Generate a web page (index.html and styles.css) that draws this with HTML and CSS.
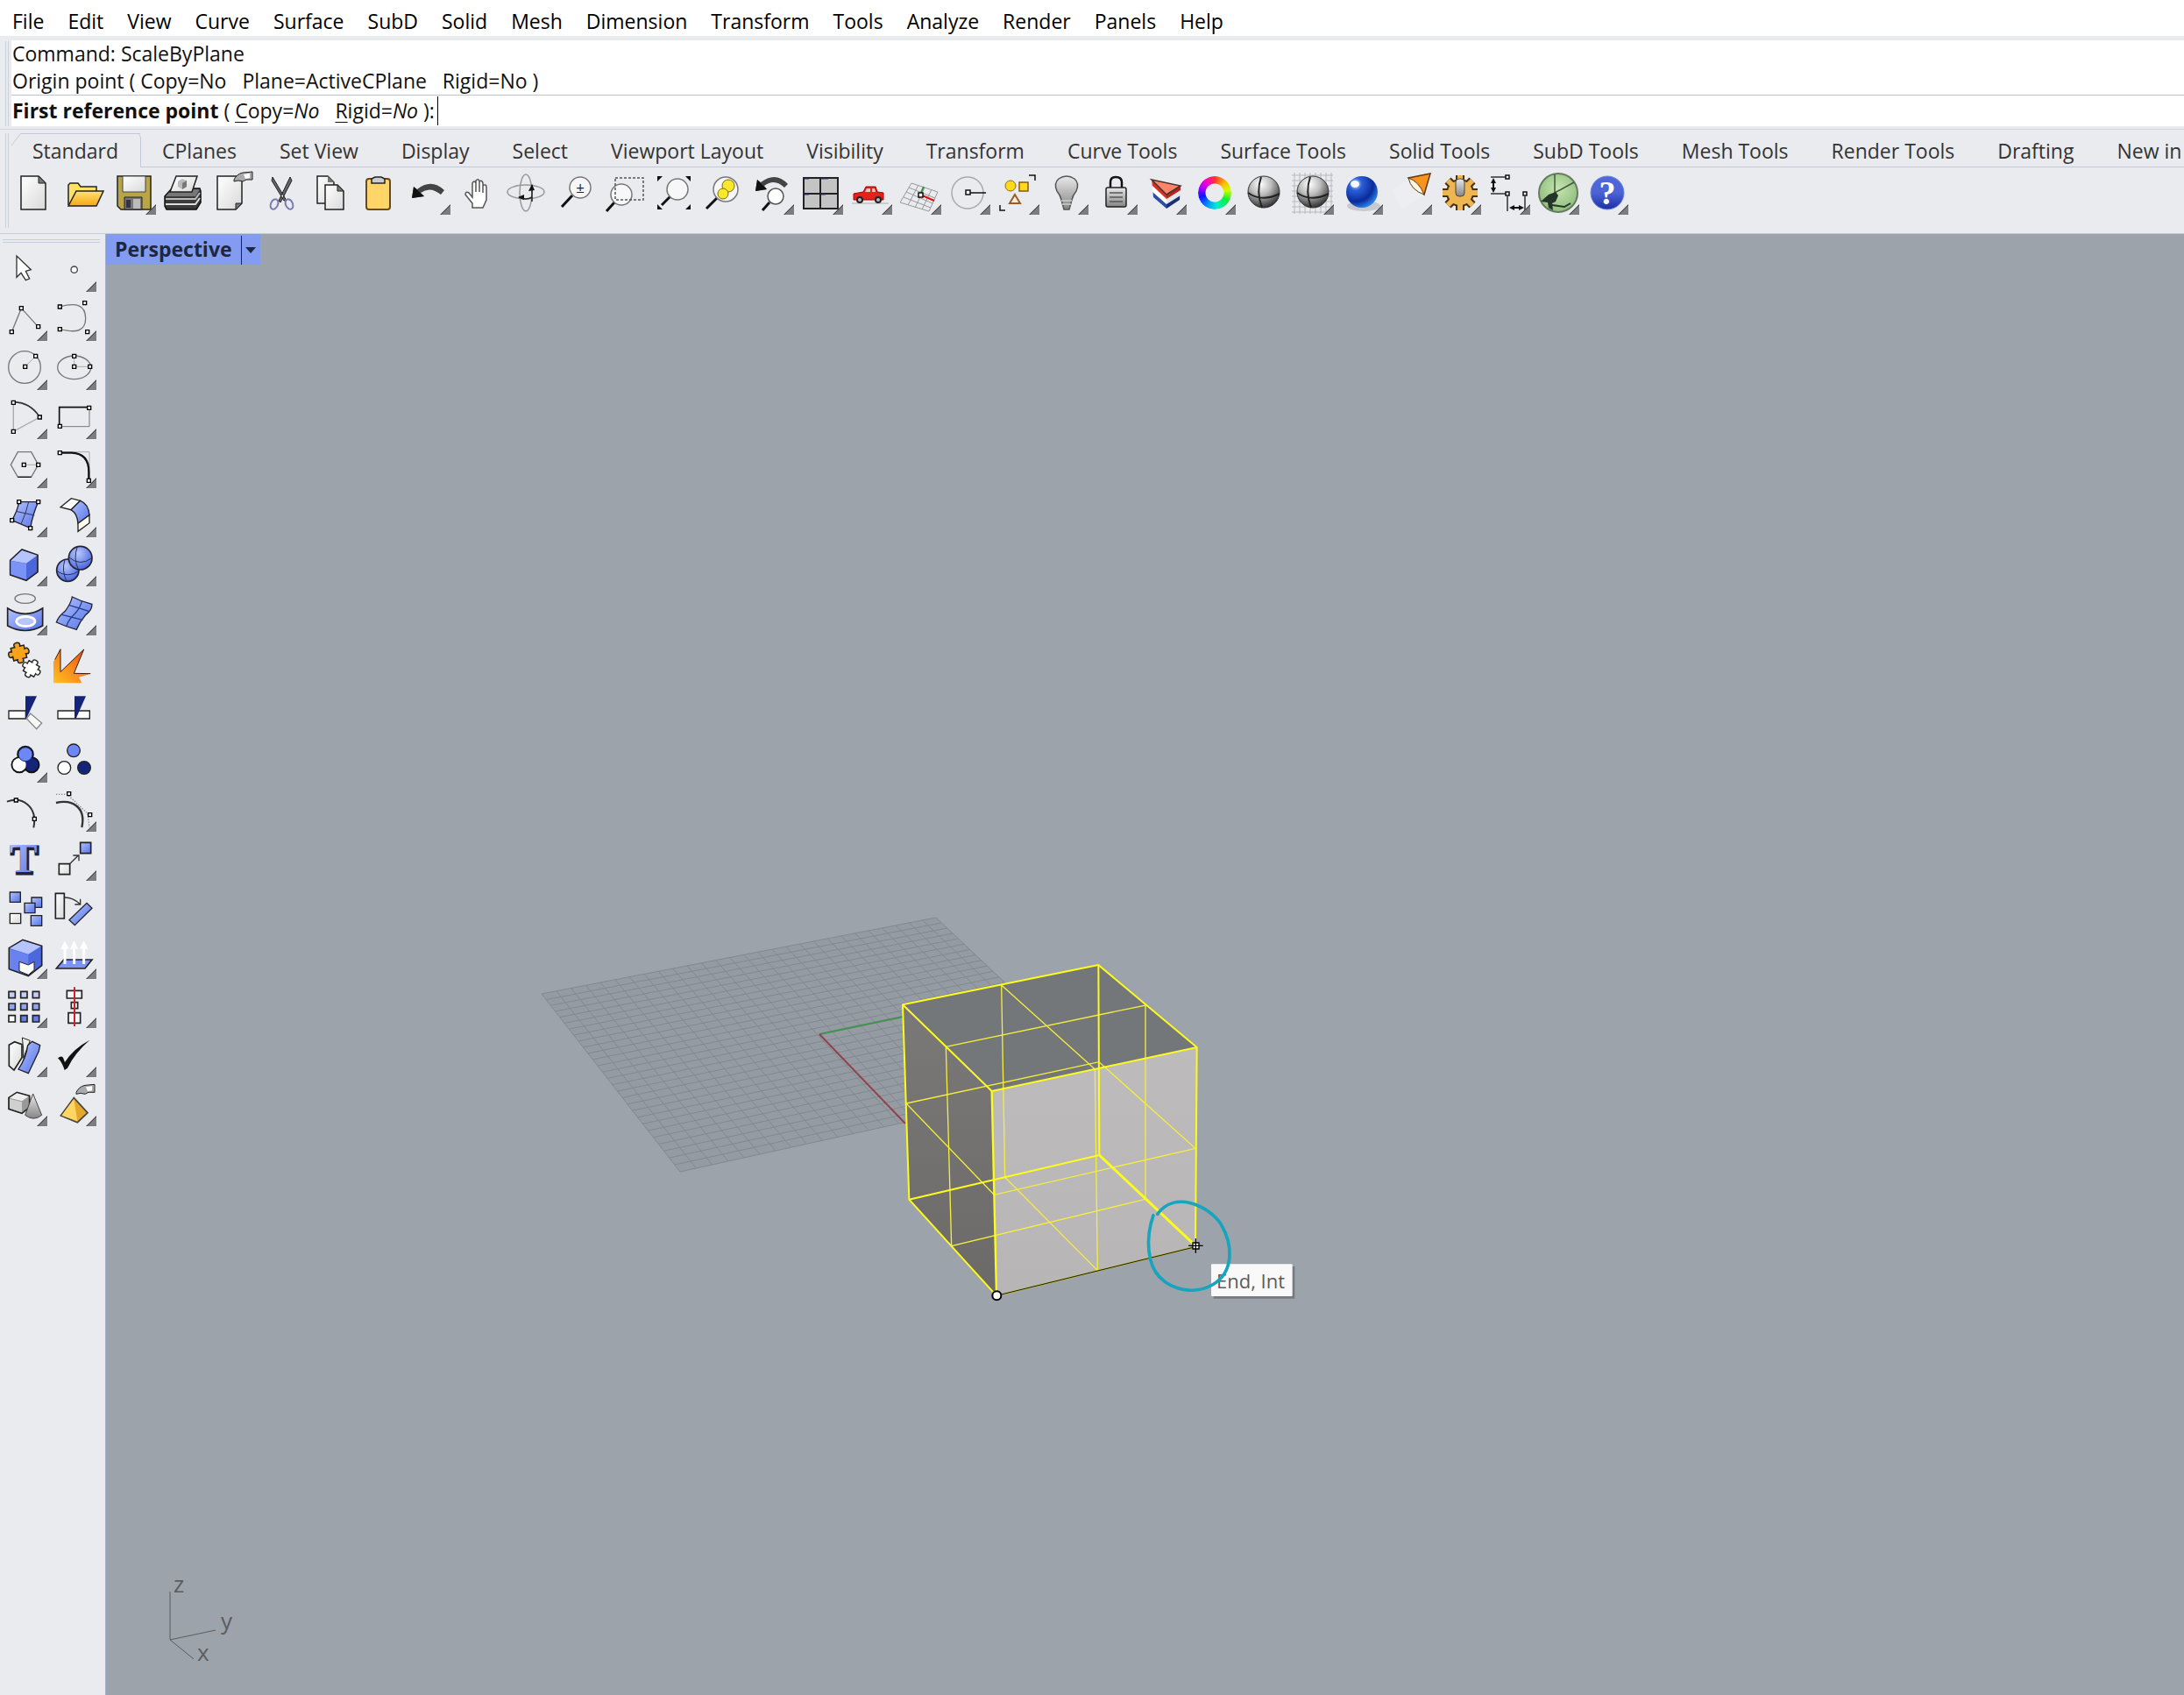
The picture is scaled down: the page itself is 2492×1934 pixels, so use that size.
FILE: index.html
```html
<!DOCTYPE html>
<html lang="en">
<head>
<meta charset="utf-8">
<title>Rhino</title>
<link rel="stylesheet" href="styles.css">
</head>
<body>
<svg class="defs" aria-hidden="true">
  <defs>
    <linearGradient id="paper" x1="0" y1="0" x2="1" y2="1"><stop offset="0" stop-color="#fff"/><stop offset="1" stop-color="#d9d9d9"/></linearGradient>
    <linearGradient id="blue" x1="0" y1="0" x2="1" y2="1"><stop offset="0" stop-color="#b3c3ff"/><stop offset="1" stop-color="#5573e8"/></linearGradient>
    <linearGradient id="gold" x1="0" y1="0" x2="0" y2="1"><stop offset="0" stop-color="#ffe27a"/><stop offset="1" stop-color="#f5a70f"/></linearGradient>
    <linearGradient id="steel" x1="0" y1="0" x2="0" y2="1"><stop offset="0" stop-color="#e8e8e8"/><stop offset="1" stop-color="#858585"/></linearGradient>
    <linearGradient id="fire" x1="1" y1="0" x2="0" y2="1"><stop offset="0" stop-color="#e8420b"/><stop offset=".5" stop-color="#f7861d"/><stop offset="1" stop-color="#ffc21f"/></linearGradient>
    <linearGradient id="quad" x1="0" y1="0" x2="0" y2="1"><stop offset="0" stop-color="#5068d8"/><stop offset=".5" stop-color="#4b63d6"/><stop offset="1" stop-color="#1d2fa5"/></linearGradient>
    <radialGradient id="ball" cx=".4" cy=".25" r=".75"><stop offset="0" stop-color="#fff"/><stop offset=".45" stop-color="#bdbdbd"/><stop offset="1" stop-color="#333"/></radialGradient>
    <radialGradient id="blueball" cx=".3" cy=".25" r=".8"><stop offset="0" stop-color="#e8f1ff"/><stop offset=".25" stop-color="#2b5fd8"/><stop offset=".7" stop-color="#0a2a9b"/><stop offset="1" stop-color="#2f86e8"/></radialGradient>
    <radialGradient id="softblue" cx=".4" cy=".3" r=".7"><stop offset="0" stop-color="#b9c8ff"/><stop offset="1" stop-color="#4a67dd"/></radialGradient>
    <radialGradient id="green" cx=".5" cy=".4" r=".6"><stop offset="0" stop-color="#c5e5ad"/><stop offset="1" stop-color="#8fbc7e"/></radialGradient>
    <linearGradient id="front" x1="0" y1="0" x2="0" y2="1"><stop offset="0" stop-color="#bdbbbc"/><stop offset="1" stop-color="#b7b5b6"/></linearGradient>
    <linearGradient id="side" x1="0" y1="0" x2="0" y2="1"><stop offset="0" stop-color="#7a7977"/><stop offset="1" stop-color="#6b6a69"/></linearGradient>
    <g id="sphere"><circle cx="24" cy="22" r="18" fill="url(#ball)" stroke="#333"/><path d="M21 5Q15 22 22 40M6 23Q22 34 42 24" fill="none" stroke="#222" stroke-width="2"/></g>
    <g id="pointer"><path d="M-1 9C1 5 4 2 9 1L20 0V9H13L9 11L4 10L-1 11Z" fill="#aaa" stroke="#222"/><path d="M10 3L17 2V7L12 8Z" fill="#fff"/></g>
    <path id="jigsaw" d="M-20-18H-8Q-12-30 0-30Q12-30 8-18H20V-7Q31-11 31 1Q31 12 20 8V20H8Q12 31 0 31Q-12 31-8 20H-20V8Q-31 12-31 1Q-31-11-20-7Z"/>
    <path id="teeth" d="M24 3V43M4 23H44M10 9L38 37M38 9L10 37"/>
  </defs>
</svg>

<nav class="menubar" aria-label="Main menu">
  <button>File</button><button>Edit</button><button>View</button><button>Curve</button><button>Surface</button><button>SubD</button><button>Solid</button><button>Mesh</button><button>Dimension</button><button>Transform</button><button>Tools</button><button>Analyze</button><button>Render</button><button>Panels</button><button>Help</button>
</nav>

<section class="command" aria-label="Command line">
  <div class="grip"></div>
  <div class="console">
    <p>Command: ScaleByPlane</p>
    <p>Origin point ( Copy=No&nbsp; <span class="opt">Plane=ActiveCPlane</span>&nbsp; <span class="opt">Rigid=No</span> )</p>
    <div class="prompt">
      <label for="cmd"><b>First reference point</b> ( <u>C</u>opy=<i>No</i>&nbsp; <span class="opt"><u>R</u>igid=<i>No</i></span> ):</label>
      <input id="cmd" type="text" autocomplete="off">
    </div>
  </div>
</section>

<section class="ribbon">
  <div class="grip"></div>
  <div class="ribbon-body">
    <div class="tabs" role="tablist">
      <button role="tab" class="active" aria-selected="true">Standard</button><button role="tab">CPlanes</button><button role="tab">Set View</button><button role="tab">Display</button><button role="tab">Select</button><button role="tab">Viewport Layout</button><button role="tab">Visibility</button><button role="tab">Transform</button><button role="tab">Curve Tools</button><button role="tab">Surface Tools</button><button role="tab">Solid Tools</button><button role="tab">SubD Tools</button><button role="tab">Mesh Tools</button><button role="tab">Render Tools</button><button role="tab">Drafting</button><button role="tab">New in</button>
    </div>
    <div class="tools">
      <button class="tool" aria-label="New"><svg viewBox="0 0 48 48"><path d="M6 4H26L34 12V42H6Z" fill="url(#paper)" stroke="#222" stroke-width="1.5"/><path d="M26 4V12H34Z" fill="#777" stroke="#222"/></svg></button>
      <button class="tool" aria-label="Open"><svg viewBox="0 0 48 48"><path d="M4 37V14L6 12H15L18 16H36V22" fill="#ffe06b" stroke="#222" stroke-width="1.5"/><path d="M4 38L13 21H44L36 38Z" fill="url(#gold)" stroke="#222" stroke-width="1.5"/></svg></button>
      <button class="tool fly" aria-label="Save"><svg viewBox="0 0 48 48"><path d="M4 4H42V42H8L4 38Z" fill="#b9a548" stroke="#222" stroke-width="1.5"/><path d="M10 4H36V22H10Z" fill="url(#paper)" stroke="#444"/><path d="M12 28H32V42H12Z" fill="#777" stroke="#222"/><path d="M14 31H19V40H14Z" fill="#334"/><path d="M22 30H30V41H22Z" fill="#bbb"/></svg></button>
      <button class="tool" aria-label="Print"><svg viewBox="0 0 48 48"><path d="M2 27L10 18H42L43 21V34L38 42H4L2 38Z" fill="#3a3a3a" stroke="#111" stroke-width="1.5"/><path d="M3 27L10 19H42L37 27Z" fill="#777"/><path d="M3 30H37L42 23" fill="none" stroke="#bbb" stroke-width="2"/><path d="M3 36H37L42 29" fill="none" stroke="#ddd" stroke-width="2"/><path d="M8 22L15 4H39L33 22Z" fill="url(#paper)" stroke="#222" stroke-width="1.5"/><path d="M17 10L22 7L27 9V16L22 19L17 16Z" fill="#bbb"/><path d="M22 12L27 9V16L22 19Z" fill="#777"/></svg></button>
      <button class="tool" aria-label="Document properties"><svg viewBox="0 0 48 48"><path d="M6 4H34V35L27 42H6Z" fill="url(#paper)" stroke="#222" stroke-width="1.5"/><path d="M27 42V35H34Z" fill="#777" stroke="#222"/><use href="#pointer" x="26" y="-1"/></svg></button>
      <button class="tool" aria-label="Cut"><svg viewBox="0 0 48 48"><path d="M13 5L29 32L26 32L12 9Z M33 5L20 32L22 34L35 9Z" fill="#666" stroke="#222"/><ellipse cx="15" cy="36" rx="4" ry="6" transform="rotate(25 15 36)" fill="none" stroke="#777bb0" stroke-width="2"/><ellipse cx="32" cy="36" rx="4" ry="6" transform="rotate(-25 32 36)" fill="none" stroke="#777bb0" stroke-width="2"/></svg></button>
      <button class="tool" aria-label="Copy"><svg viewBox="0 0 48 48"><path d="M8 4H20L27 11V35H8Z" fill="url(#paper)" stroke="#222" stroke-width="1.5"/><path d="M20 4V11H27Z" fill="#777"/><path d="M17 14H31L38 21V42H17Z" fill="url(#paper)" stroke="#222" stroke-width="1.5"/><path d="M31 14V21H38Z" fill="#777" stroke="#222"/></svg></button>
      <button class="tool" aria-label="Paste"><svg viewBox="0 0 48 48"><rect x="8" y="7" width="27" height="35" rx="3" fill="#ffd567" stroke="#6b4a10" stroke-width="2"/><path d="M14 12V7L18 5H25L29 7V12Z" fill="#ccc" stroke="#222" stroke-width="1.5"/></svg></button>
      <button class="tool fly" aria-label="Undo"><svg viewBox="0 0 48 48"><path d="M4 29L6 16L10 19Q26 6 41 20L37 25Q25 15 14 23L18 27Z" fill="#444"/><path d="M4 29L6 16L18 27Z" fill="#111"/></svg></button>
      <button class="tool" aria-label="Pan"><svg viewBox="0 0 48 48"><path d="M17 40V35L9 25Q9 21 13 23L17 28V12Q19 8 21 12V22V9Q24 6 25 10V22V10Q28 8 29 12V23V15Q33 12 33 17V31L29 40Z" fill="#fff" stroke="#555" stroke-width="1.5"/></svg></button>
      <button class="tool" aria-label="Rotate view"><svg viewBox="0 0 48 48" fill="none" stroke="#999" stroke-width="1.5"><ellipse cx="22" cy="22" rx="21" ry="8"/><ellipse cx="22" cy="23" rx="7" ry="21"/><path d="M29 14V33M29 28Q22 32 14 28" stroke="#222"/><path d="M25 21L29 13L32 20ZM20 25L13 28L20 31Z" fill="#111" stroke="none"/></svg></button>
      <button class="tool" aria-label="Zoom"><svg viewBox="0 0 48 48"><path d="M19 26L7 39" stroke="#111" stroke-width="3"/><circle cx="28" cy="17" r="12" fill="#f7f7f9" stroke="#777" stroke-width="1.5"/><text x="28" y="23" font-size="17" text-anchor="middle" font-family="Open Sans" fill="#222">±</text></svg></button>
      <button class="tool" aria-label="Zoom window"><svg viewBox="0 0 48 48"><path d="M11 34L2 44" stroke="#111" stroke-width="3"/><circle cx="19" cy="25" r="12" fill="#f7f7f9" stroke="#777" stroke-width="1.5"/><path d="M12 6H44V31H12Z" fill="none" stroke="#555" stroke-width="1.5" stroke-dasharray="3 2"/></svg></button>
      <button class="tool" aria-label="Zoom extents"><svg viewBox="0 0 48 48"><path d="M19 27L9 37" stroke="#111" stroke-width="3"/><circle cx="27" cy="19" r="12" fill="#f7f7f9" stroke="#777" stroke-width="1.5"/><path d="M4 4H10L4 10ZM42 4H36L42 10ZM4 42H10L4 36ZM42 42H36L42 36Z" fill="#111"/></svg></button>
      <button class="tool" aria-label="Zoom selected"><svg viewBox="0 0 48 48"><path d="M16 29L4 41" stroke="#111" stroke-width="3"/><circle cx="26" cy="19" r="14" fill="#f7f7f9" stroke="#777" stroke-width="1.5"/><circle cx="29" cy="15" r="7" fill="#fbe82a" stroke="#776a10"/><circle cx="23" cy="24" r="6" fill="#fbe82a" stroke="#776a10"/></svg></button>
      <button class="tool fly" aria-label="Undo view"><svg viewBox="0 0 48 48"><path d="M4 21L6 8L10 11Q27-2 41 13L37 17Q26 6 14 15L17 19Z" fill="#444"/><path d="M4 21L6 8L17 19Z" fill="#111"/><path d="M20 34L12 43" stroke="#111" stroke-width="3"/><circle cx="27" cy="27" r="9" fill="#fff" stroke="#555" stroke-width="1.5"/></svg></button>
      <button class="tool fly" aria-label="Four viewports"><svg viewBox="0 0 48 48"><path d="M3 6H42V41H3ZM22 6V41M3 24H42" fill="#c4c4c4" stroke="#222" stroke-width="2"/><path d="M4 7H9M23 7H31M4 25H9M23 25H28" stroke="#238" stroke-width="1"/></svg></button>
      <button class="tool fly" aria-label="Set view"><svg viewBox="0 0 48 48"><path d="M2 35H44" stroke="#ccc" stroke-width="2"/><path d="M4 31V24L15 22L18 16H29L31 22L38 23V31Z" fill="#e2231a" stroke="#a00"/><path d="M19 18H23V22H17ZM25 18H28L29 22H25Z" fill="#f6c5c5"/><circle cx="11" cy="31" r="4" fill="#222"/><circle cx="32" cy="31" r="4" fill="#222"/><circle cx="11" cy="31" r="2" fill="#bbb"/><circle cx="32" cy="31" r="2" fill="#bbb"/></svg></button>
      <button class="tool fly" aria-label="Construction plane"><svg viewBox="0 0 48 48"><path d="M14 12L44 22L34 44L1 34ZM22 14L10 37M29 17L18 40M37 19L26 42M11 17L41 29M8 22L38 35M5 28L36 40" fill="none" stroke="#999"/><path d="M24 25L28 16" stroke="#2a9a3a" stroke-width="2"/><path d="M24 25L40 32" stroke="#d11" stroke-width="2"/><rect x="22" y="23" width="5" height="5" fill="#fff" stroke="#111" stroke-width="1.5"/></svg></button>
      <button class="tool fly" aria-label="Object snap"><svg viewBox="0 0 48 48"><circle cx="22" cy="23" r="18" fill="none" stroke="#aaa" stroke-width="1.5"/><path d="M25 23H43" stroke="#111" stroke-width="1.5"/><rect x="20" y="20" width="5" height="5" fill="#fff" stroke="#111" stroke-width="1.5"/></svg></button>
      <button class="tool fly" aria-label="Select"><svg viewBox="0 0 48 48"><circle cx="15" cy="15" r="6" fill="#ffd91c" stroke="#8a6a10"/><path d="M25 11H35V21H25Z" fill="#ffd91c" stroke="#8a5a10" stroke-width="1.5"/><path d="M20 25L26 35H14Z" fill="#f8eee2" stroke="#a05a20" stroke-width="2"/><path d="M36 3H43V9M3 37V43H9" fill="none" stroke="#111" stroke-width="1.5"/></svg></button>
      <button class="tool fly" aria-label="Hide"><svg viewBox="0 0 48 48"><path d="M17 31Q16 26 12 21Q8 12 14 7Q23 1 32 7Q38 12 34 21Q30 26 29 31L26 42H20Z" fill="url(#steel)" stroke="#555" stroke-width="1.5"/><path d="M17 32H29M18 36H28" stroke="#ccc" stroke-width="1.5"/></svg></button>
      <button class="tool fly" aria-label="Lock"><svg viewBox="0 0 48 48"><path d="M17 19V11Q17 5 23 5Q30 5 30 11V19" fill="none" stroke="#111" stroke-width="2.5"/><rect x="12" y="17" width="23" height="22" rx="2" fill="url(#steel)" stroke="#222" stroke-width="1.5"/><path d="M16 23H31M16 28H31M16 33H31" stroke="#555" stroke-width="1.5"/></svg></button>
      <button class="tool fly" aria-label="Layers"><svg viewBox="0 0 48 48"><path d="M8 8L25 24V41L10 28Z" fill="#2c4ea8"/><path d="M25 24L41 15L40 31L25 41Z" fill="#1a2f78"/><path d="M8 8L25 24V36L9 22Z" fill="#fff"/><path d="M25 24L41 15V26L25 36Z" fill="#e6e6ea"/><path d="M8 8L25 24V30L9 15Z" fill="#d8321f"/><path d="M25 24L41 15V20L25 30Z" fill="#b5241a"/><path d="M8 8L41 15L25 25Z" fill="#ff8568" stroke="#433" stroke-width="1.5"/></svg></button>
      <button class="tool fly" aria-label="Object properties"><span class="wheel"></span></button>
      <button class="tool" aria-label="Shade"><svg viewBox="0 0 48 48"><use href="#sphere"/></svg></button>
      <button class="tool fly" aria-label="Render preview"><svg viewBox="0 0 48 48"><path d="M3 0V47M9 0V47M15 0V47M21 0V47M27 0V47M33 0V47M39 0V47M45 0V47M0 3H47M0 9H47M0 15H47M0 21H47M0 27H47M0 33H47M0 39H47M0 45H47" stroke="#b7b8bd"/><use href="#sphere"/></svg></button>
      <button class="tool fly" aria-label="Render"><svg viewBox="0 0 48 48"><ellipse cx="26" cy="38" rx="19" ry="6" fill="#c9cad0"/><circle cx="24" cy="22" r="18" fill="url(#blueball)"/><ellipse cx="16" cy="13" rx="5" ry="4" fill="#fff" opacity=".9"/></svg></button>
      <button class="tool fly" aria-label="Lights"><svg viewBox="0 0 48 48"><path d="M20 8L38 26L14 42L2 20Z" fill="#f3f3f5" opacity=".4"/><path d="M21 6L46 1L39 25Z" fill="#f9931f" stroke="#5b3a12" stroke-width="1.5"/><path d="M21 6Q33 10 39 25Q24 20 21 6Z" fill="#fff4dd" stroke="#5b3a12"/></svg></button>
      <button class="tool fly" aria-label="Options"><svg viewBox="0 0 48 48"><use href="#teeth" stroke="#4a300a" stroke-width="10"/><circle cx="24" cy="23" r="16" fill="#4a300a"/><use href="#teeth" stroke="#eeb651" stroke-width="6"/><circle cx="24" cy="23" r="14" fill="#eeb651"/><rect x="19" y="7" width="10" height="20" rx="4" fill="url(#steel)" stroke="#444"/></svg></button>
      <button class="tool fly" aria-label="Dimensions"><svg viewBox="0 0 48 48"><path d="M3 5H20M3 24H20M22 27V44M42 27V44" stroke="#333" stroke-width="1.5"/><path d="M6 10V19M28 40H36" stroke="#111" stroke-width="2"/><path d="M3 12L6 6L9 12ZM3 17L6 23L9 17ZM30 37L24 40L30 43ZM35 37L41 40L35 43Z" fill="#111"/><path d="M20 3H24V7H20ZM20 22H24V26H20ZM40 22H44V26H40Z" fill="#fff" stroke="#111" stroke-width="1.5"/></svg></button>
      <button class="tool fly" aria-label="Grasshopper"><svg viewBox="0 0 48 48"><circle cx="24" cy="23" r="22" fill="url(#green)" stroke="#667c60" stroke-width="2"/><path d="M20 2V23L42 11" fill="none" stroke="#415540" stroke-width="1.5"/><path d="M4 33L13 25L21 22L24 26L21 33L17 35L18 43L13 40L12 34Z" fill="#263328"/><path d="M17 37L31 39L38 35" fill="none" stroke="#263328" stroke-width="2"/></svg></button>
      <button class="tool fly" aria-label="Help"><svg viewBox="0 0 48 48"><circle cx="24" cy="23" r="19" fill="url(#quad)" stroke="#7086d8"/><text x="24" y="36" font-size="38" font-weight="bold" text-anchor="middle" font-family="Liberation Serif" fill="#fff">?</text></svg></button>
    </div>
  </div>
</section>

<main class="workspace">
  <aside class="sidebar" aria-label="Main tools">
    <div class="grip-h"></div>
    <div class="palette">
      <button class="tool" aria-label="Select"><svg viewBox="18 45 144 144"><path d="M57 66V139L72 124L88 149L101 144L88 118L106 113Z" fill="#fff" stroke="#333" stroke-width="4"/></svg></button>
      <button class="tool fly" aria-label="Point"><svg viewBox="186 45 144 144"><circle cx="254" cy="113" r="11" fill="#fff" stroke="#444" stroke-width="4"/></svg></button>

      <button class="tool fly" aria-label="Polyline"><svg viewBox="18 213 144 144"><path d="M40 326L73 245L130 308" class="ln"/><path d="M34 320h12v12h-12zM67 239h12v12h-12zM125 302h12v12h-12z" class="pt"/></svg></button>
      <button class="tool fly" aria-label="Curve"><svg viewBox="186 213 144 144"><path d="M205 240C260 225 293 232 293 280C293 325 260 330 205 317" class="ln"/><path d="M199 234h12v12h-12zM284 221h12v12h-12zM199 311h12v12h-12zM293 320h12v12h-12z" class="pt"/></svg></button>

      <button class="tool fly" aria-label="Circle"><svg viewBox="18 381 144 144"><circle cx="84" cy="447" r="55" class="ln"/><path d="M86 445L122 409" stroke="#aaa" stroke-width="3"/><path d="M80 439h12v12h-12zM116 403h12v12h-12z" class="pt"/></svg></button>
      <button class="tool fly" aria-label="Ellipse"><svg viewBox="186 381 144 144"><ellipse cx="254" cy="448" rx="57" ry="40" class="ln"/><path d="M254 409V445H308" fill="none" stroke="#aaa" stroke-width="3"/><path d="M248 403h12v12h-12zM248 439h12v12h-12zM302 439h12v12h-12z" class="pt"/></svg></button>

      <button class="tool fly" aria-label="Arc"><svg viewBox="18 549 144 144"><path d="M46 568V667L136 618" fill="none" stroke="#aaa" stroke-width="4"/><path d="M46 566Q105 568 136 618" fill="none" stroke="#333" stroke-width="5"/><path d="M40 562h12v12h-12zM40 661h12v12h-12zM130 612h12v12h-12z" class="pt"/></svg></button>
      <button class="tool fly" aria-label="Rectangle"><svg viewBox="186 549 144 144"><path d="M204 650H306V584" fill="none" stroke="#777" stroke-width="3"/><path d="M203 650V584H306" fill="none" stroke="#111" stroke-width="5"/><path d="M199 643h12v12h-12zM299 580h12v12h-12z" class="pt"/></svg></button>

      <button class="tool fly" aria-label="Polygon"><svg viewBox="18 -3 144 144"><path d="M37 61L61 17H107L131 61L107 103H61Z" class="ln"/><path d="M61 103H107" stroke="#111" stroke-width="4"/><path d="M82 61H130" stroke="#aaa" stroke-width="3"/><path d="M76 55h12v12h-12zM125 55h12v12h-12z" class="pt"/></svg></button>
      <button class="tool fly" aria-label="Fillet"><svg viewBox="186 -3 144 144"><path d="M205 17H306V115" fill="none" stroke="#aaa" stroke-width="3"/><path d="M205 20H245Q304 22 304 85V115" fill="none" stroke="#111" stroke-width="7"/><path d="M199 14h12v12h-12zM298 109h12v12h-12z" class="pt"/></svg></button>

      <button class="tool fly" aria-label="Surface"><svg viewBox="18 165 144 144"><path d="M65 188H131Q112 230 104 278L41 251Q60 218 65 188Z" fill="url(#blue)" stroke="#223" stroke-width="4"/><path d="M98 188Q90 225 72 264M54 220L118 234" fill="none" stroke="#335" stroke-width="3"/><path d="M59 182h12v12h-12zM125 182h12v12h-12zM35 245h12v12h-12zM98 272h12v12h-12z" class="pt"/></svg></button>
      <button class="tool fly" aria-label="Fillet surface"><svg viewBox="186 165 144 144"><path d="M207 206L244 176L275 184L243 215Z" fill="#fff" stroke="#222" stroke-width="4"/><path d="M243 215L275 184Q303 195 306 233L267 262Q265 228 243 215Z" fill="url(#blue)" stroke="#222" stroke-width="4"/><path d="M267 262L306 233V260L267 289Z" fill="#fffdf2" stroke="#222" stroke-width="4"/></svg></button>

      <button class="tool fly" aria-label="Box"><svg viewBox="18 333 144 144"><path d="M35 388L75 351L129 370V428L90 457L35 438Z" fill="#4c67dc" stroke="#222" stroke-width="5"/><path d="M37 389L75 354L127 371L90 398Z" fill="#b5c4ff"/><path d="M37 390L90 399V454L37 436Z" fill="#7a93f5"/></svg></button>
      <button class="tool fly" aria-label="Sphere"><svg viewBox="186 333 144 144"><circle cx="232" cy="422" r="38" fill="url(#softblue)" stroke="#223" stroke-width="5"/><path d="M222 385Q210 425 228 459M195 425Q232 450 269 425" fill="none" stroke="#235" stroke-width="3"/><circle cx="275" cy="380" r="40" fill="url(#softblue)" stroke="#223" stroke-width="5"/><path d="M265 341Q250 380 268 419M236 378Q275 410 314 380" fill="none" stroke="#235" stroke-width="3"/></svg></button>

      <button class="tool fly" aria-label="Project"><svg viewBox="18 501 144 144"><ellipse cx="86" cy="519" rx="35" ry="16" class="ln"/><path d="M26 552Q86 590 146 552V612Q86 645 26 612Z" fill="url(#blue)" stroke="#222" stroke-width="5"/><ellipse cx="88" cy="597" rx="32" ry="17" fill="#b8c5f8" stroke="#fff" stroke-width="8"/></svg></button>
      <button class="tool fly" aria-label="Extract surface"><svg viewBox="186 501 144 144"><path d="M247 513Q280 530 315 538Q315 560 293 575Q272 600 262 625Q225 615 193 600Q200 580 223 562Q243 535 247 513Z" fill="url(#blue)" stroke="#223" stroke-width="4"/><path d="M281 526Q275 550 257 570Q235 590 228 612M238 542L304 562M212 574L283 592" fill="none" stroke="#223c88" stroke-width="4"/></svg></button>

      <button class="tool" aria-label="Join"><svg viewBox="18 -21 144 144"><g stroke="#222" stroke-width="4"><use href="#jigsaw" transform="translate(64 14) rotate(-14) scale(1.15)" fill="#f9a21b"/><use href="#jigsaw" transform="translate(108 68) rotate(30) scale(1.05)" fill="#fff"/></g></svg></button>
      <button class="tool" aria-label="Explode"><svg viewBox="186 -21 144 144"><path d="M183 118V45L188 38L207 2V80L287 3L253 85L310 86L270 98L280 118Z" fill="url(#fire)"/><path d="M188 38L207 2V80L287 3L253 85L310 86" fill="none" stroke="#3a1a0a" stroke-width="3"/></svg></button>

      <button class="tool" aria-label="Trim"><svg viewBox="18 147 144 144"><path d="M30 213H88V240H30Z" fill="#fff" stroke="#222" stroke-width="4"/><path d="M87 163H126L90 240H87Z" fill="#13247a"/><path d="M104 222L143 255L125 275L91 240Z" fill="#f7f7f7" stroke="#888" stroke-width="4"/></svg></button>
      <button class="tool" aria-label="Split"><svg viewBox="186 147 144 144"><path d="M198 213H307V240H198Z" fill="#fff" stroke="#222" stroke-width="4"/><path d="M255 163H294L260 240H255Z" fill="#13247a"/></svg></button>

      <button class="tool fly" aria-label="Boolean union"><svg viewBox="18 315 144 144"><g fill="none" stroke="#111" stroke-width="11"><circle cx="66" cy="398" r="23"/><circle cx="108" cy="398" r="23"/><circle cx="87" cy="362" r="24"/></g><circle cx="108" cy="398" r="23" fill="#13247a"/><circle cx="66" cy="398" r="23" fill="#fff"/><circle cx="87" cy="362" r="24" fill="#6f86f5" stroke="#13247a" stroke-width="3"/></svg></button>
      <button class="tool" aria-label="Group"><svg viewBox="186 315 144 144"><g stroke="#222" stroke-width="4"><circle cx="252" cy="349" r="22" fill="#6f86f5"/><circle cx="220" cy="408" r="22" fill="#fff"/><circle cx="288" cy="408" r="22" fill="#13247a"/></g></svg></button>

      <button class="tool" aria-label="Edit points"><svg viewBox="18 483 144 144"><path d="M24 524C75 505 130 540 115 613" fill="none" stroke="#333" stroke-width="6"/><path d="M49 513h12v12h-12zM112 577h12v12h-12z" class="pt"/></svg></button>
      <button class="tool fly" aria-label="Control points"><svg viewBox="186 483 144 144"><path d="M192 528C250 515 295 545 280 612" fill="none" stroke="#333" stroke-width="7"/><path d="M192 499H230L300 565L306 612" fill="none" stroke="#888" stroke-width="4" stroke-dasharray="4 5"/><path d="M230 491h12v12h-12zM302 563h12v12h-12z" class="pt"/></svg></button>

      <button class="tool" aria-label="Text"><svg viewBox="18 651 144 144"><g font-family="Liberation Serif" font-weight="bold" font-size="142" text-anchor="middle"><text x="84" y="770" fill="#233" stroke="#223" stroke-width="9">T</text><text x="80" y="766" fill="url(#blue)">T</text></g></svg></button>
      <button class="tool fly" aria-label="Move"><svg viewBox="186 651 144 144"><path d="M202 737H239V773H202Z" fill="url(#paper)" stroke="#222" stroke-width="5"/><path d="M275 664H311V701H275Z" fill="url(#blue)" stroke="#222" stroke-width="5"/><path d="M240 736L269 707M250 708H270V727" fill="none" stroke="#333" stroke-width="4"/></svg></button>

      <button class="tool" aria-label="Copy"><svg viewBox="18 9 144 144"><g stroke="#222" stroke-width="4"><path d="M34 24H70V58H34Z" fill="url(#blue)"/><path d="M108 42H143V76H108Z" fill="url(#blue)"/><path d="M84 61H120V95H84Z" fill="url(#blue)"/><path d="M106 104H143V139H106Z" fill="url(#blue)"/><path d="M34 97H71V131H34Z" fill="url(#paper)"/></g></svg></button>
      <button class="tool" aria-label="Rotate"><svg viewBox="186 9 144 144"><path d="M190 28H220V114H190Z" fill="url(#paper)" stroke="#222" stroke-width="5"/><path d="M237 119L297 61L315 79L256 137Z" fill="url(#blue)" stroke="#222" stroke-width="4"/><path d="M222 42Q250 42 273 64M275 47V66H256" fill="none" stroke="#333" stroke-width="4"/></svg></button>

      <button class="tool fly" aria-label="Solid editing"><svg viewBox="18 177 144 144"><path d="M31 215L78 187L143 208V275L97 311L31 287Z" fill="#4d68de" stroke="#222" stroke-width="5"/><path d="M33 216L78 190L140 209L97 236Z" fill="#b5c4ff"/><path d="M33 218L97 238V307L33 285Z" fill="#6982f0"/><path d="M66 262L97 273L117 262V290L97 307L66 294Z" fill="#fff" stroke="#222" stroke-width="3"/></svg></button>
      <button class="tool fly" aria-label="Analyze direction"><svg viewBox="186 177 144 144"><path d="M193 285L218 255H315L291 285Z" fill="#7c94f5" stroke="#222" stroke-width="5"/><path d="M222 270V215M254 270V215M287 270V215" stroke="#fff" stroke-width="9"/><path d="M208 218L222 190L236 218ZM240 218L254 190L268 218ZM273 218L287 190L301 218Z" fill="#fff"/></svg></button>

      <button class="tool fly" aria-label="Array"><svg viewBox="18 345 144 144"><g stroke="#222" stroke-width="5"><path d="M30 364h22v22h-22zM71 364h22v22h-22zM112 364h22v22h-22z" fill="#c4cff8"/><path d="M30 405h22v22h-22zM71 405h22v22h-22zM112 405h22v22h-22z" fill="#92a5f2"/><path d="M71 446h22v22h-22zM112 446h22v22h-22z" fill="#6780ea"/><path d="M30 446h22v22h-22z" fill="#fff"/></g></svg></button>
      <button class="tool fly" aria-label="Align"><svg viewBox="186 345 144 144"><path d="M229 361H280V387H229ZM244 401H266V422H244ZM234 437H275V472H234Z" fill="#f7f7f7" stroke="#222" stroke-width="5"/><path d="M255 349V483" stroke="#d3202a" stroke-width="6"/></svg></button>

      <button class="tool fly" aria-label="Flow"><svg viewBox="18 513 144 144"><path d="M76 522L103 532L80 592V560Z" fill="#eee" stroke="#222" stroke-width="3"/><path d="M31 547L50 536L75 545V590L48 633L31 618Z" fill="url(#paper)" stroke="#222" stroke-width="5"/><path d="M95 548L110 535L137 548L133 568L97 644L63 630Q90 590 95 548Z" fill="url(#blue)" stroke="#222" stroke-width="4"/></svg></button>
      <button class="tool fly" aria-label="Check"><svg viewBox="186 513 144 144"><path d="M198 592Q210 582 216 590L222 606Q250 560 307 530Q255 575 231 626L221 633Q212 605 198 592Z" fill="#111"/></svg></button>

      <button class="tool fly" aria-label="Mesh"><svg viewBox="18 681 144 144"><path d="M30 727L58 709L101 721V760L75 781L30 766Z" fill="#999" stroke="#222" stroke-width="5"/><path d="M33 728L58 712L98 723L75 739Z" fill="#eee"/><path d="M33 731L75 742V778L33 764Z" fill="#cfcfcf"/><path d="M113 714L143 787Q115 810 86 787Z" fill="url(#steel)" stroke="#444" stroke-width="3"/></svg></button>
      <button class="tool fly" aria-label="Edit mesh"><svg viewBox="186 681 144 144"><path d="M253 728L300 779L265 812L208 789Z" fill="#e2a82c" stroke="#444" stroke-width="5"/><path d="M253 731L265 808L211 788Z" fill="#ffd564"/><use href="#pointer" transform="translate(264 682) scale(3)"/></svg></button>
    </div>
  </aside>

  <section class="viewport" aria-label="Perspective viewport">
    <svg class="scene" viewBox="121 267 2371 1667">
      <g id="cplane"></g>
      <path class="axis-y" d="M935 1180L1030 1160"/>
      <path class="axis-x" d="M935 1180L1033 1282"/>
      <svg x="1000" y="1080" width="500" height="420" viewBox="0 0 1500 1260">
        <path d="M90 199L760 63L1097 345L395 495Z" fill="#74777a"/>
        <path d="M90 199L395 495L411 1195L112 866Z" fill="url(#side)"/>
        <path d="M395 495L1097 345L1092 1024L411 1195Z" fill="url(#front)"/>
        <g fill="none" stroke="#f4ee3c" stroke-width="4">
          <path d="M428 132L748 420L757 1109L440 790ZM238 343L921 201V865L257 1025Z"/>
          <path d="M102 537L762 395L1092 691L403 850Z"/>
        </g>
        <g fill="none" stroke="#fdfb1e" stroke-width="6" stroke-linejoin="round">
          <path d="M90 199L760 63L1097 345L395 495ZM90 199L112 866L411 1195M112 866L763 714M760 63L763 714M1097 345L1092 1024"/>
          <path d="M395 495L411 1195" stroke-width="7"/>
          <path d="M763 714L1092 1024" stroke-width="9"/>
        </g>
        <path d="M411 1195L1092 1028" stroke="#c9c320" stroke-width="5"/>
        <path d="M411 1195L1092 1028" stroke="#1c1c08" stroke-width="3"/>
        <circle cx="412" cy="1195" r="15" fill="#fff" stroke="#000" stroke-width="6"/>
        <path d="M1083 1014h21v21h-21z" fill="#fff" stroke="#000" stroke-width="4"/>
        <path d="M1068 1024H1118M1093 999V1049" stroke="#000" stroke-width="4"/>
        <path d="M1154 1095H1432V1205H1154Z" fill="#6d7177" opacity=".8"/>
        <rect x="1146" y="1087" width="278" height="110" rx="3" fill="#f9f9fa"/>
        <text x="1164" y="1169" font-size="66" fill="#5c5c5c">End, Int</text>
        <path d="M948 920C920 1000 928 1090 970 1132C1015 1180 1095 1190 1150 1158C1225 1115 1222 1020 1178 948C1135 885 1020 835 962 916" fill="none" stroke="#16a5bf" stroke-width="11" stroke-linecap="round"/>
      </svg>
      <g class="axes">
        <path d="M194 1816V1871L246 1860M194 1871L221 1893" fill="none" stroke="#5a5d61" stroke-width="1"/>
        <text x="198" y="1817">z</text><text x="252" y="1859">y</text><text x="225" y="1895">x</text>
      </g>
    </svg>
    <div class="title"><button class="name">Perspective</button><button class="drop" aria-label="Viewport menu"></button></div>
  </section>
</main>
<script src="grid.js"></script>
</body>
</html>
```

FILE: grid.js
```js
// Draws the construction plane grid by projecting a unit square onto its four screen corners.
(function () {
  var corners = [[618, 1134], [1068, 1047], [1262, 1230], [776, 1337]];
  var cells = 28;
  var p = corners;
  var dx1 = p[1][0] - p[2][0], dx2 = p[3][0] - p[2][0], sx = p[0][0] - p[1][0] + p[2][0] - p[3][0];
  var dy1 = p[1][1] - p[2][1], dy2 = p[3][1] - p[2][1], sy = p[0][1] - p[1][1] + p[2][1] - p[3][1];
  var det = dx1 * dy2 - dx2 * dy1;
  var g = (sx * dy2 - dx2 * sy) / det, h = (dx1 * sy - sx * dy1) / det;
  var a = p[1][0] - p[0][0] + g * p[1][0], b = p[3][0] - p[0][0] + h * p[3][0];
  var d = p[1][1] - p[0][1] + g * p[1][1], e = p[3][1] - p[0][1] + h * p[3][1];

  function at(u, v) {
    var w = g * u + h * v + 1;
    return ((a * u + b * v + p[0][0]) / w).toFixed(1) + ' ' + ((d * u + e * v + p[0][1]) / w).toFixed(1);
  }
  function add(path, cls) {
    var el = document.createElementNS('http://www.w3.org/2000/svg', 'path');
    el.setAttribute('d', path);
    el.setAttribute('class', cls);
    document.getElementById('cplane').appendChild(el);
  }

  var lines = '';
  for (var i = 0; i <= cells; i++) {
    var t = i / cells;
    lines += 'M' + at(t, 0) + 'L' + at(t, 1) + 'M' + at(0, t) + 'L' + at(1, t);
  }
  add('M' + at(0, 0) + 'L' + at(1, 0) + 'L' + at(1, 1) + 'L' + at(0, 1) + 'Z', 'plane');
  add(lines, 'grid-lines');
})();
```

FILE: styles.css
```css
* { box-sizing: border-box; }

body {
  margin: 0;
  min-height: 100vh;
  display: flex;
  flex-direction: column;
  background: #eaebef;
  color: #111;
  font: 23px/31px "Open Sans", "Noto Sans", sans-serif;
  overflow-x: hidden;
}

button {
  margin: 0;
  padding: 0;
  border: 0;
  background: none;
  color: inherit;
  font: inherit;
  white-space: nowrap;
}

.defs { position: absolute; width: 0; height: 0; }

.menubar {
  display: flex;
  gap: 27px;
  height: 41px;
  padding: 7px 14px 0;
  background: #fff;
  color: #000;
}

.command {
  display: flex;
  margin: 5px 0 3px;
}

.grip {
  flex: none;
  width: 4px;
  margin: 1px 3px 0 6px;
  border: solid #c9d0de;
  border-width: 0 1px;
}

.console {
  flex: 1;
  background: #fff;
  white-space: nowrap;
}
.console p { margin: 0; padding-left: 1px; }
.opt { margin-left: 6px; }

.prompt {
  display: flex;
  align-items: center;
  height: 36px;
  padding-left: 1px;
  border-top: 1px solid #bfc3cc;
}
.prompt u { text-underline-offset: 4px; text-decoration-thickness: 1px; }
.prompt input {
  flex: 1;
  height: 33px;
  margin-left: 3px;
  padding: 0;
  border: 0;
  border-left: 1px solid #000;
  outline: 0;
  background: none;
  font: inherit;
}

.ribbon {
  display: flex;
  border-top: 1px solid #d0d5e0;
  border-bottom: 1px solid #c3cad9;
}
.ribbon > .grip { margin: 4px 3px 6px 6px; }
.ribbon-body { flex: 1; min-width: 0; padding-top: 4px; }

.tabs {
  display: flex;
  overflow: hidden;
  color: #333;
}
.tabs::after { content: ""; flex: 1; border-bottom: 1px solid #c0c8da; }
.tabs button {
  flex: none;
  height: 39px;
  padding: 2px 25px 0 24px;
  border-bottom: 1px solid #c0c8da;
}
.tabs .active {
  position: relative;
  border: solid #c0c8da;
  border-width: 0 1px 0 0;
  border-top-right-radius: 6px;
}
.tabs .active::before {
  content: "";
  position: absolute;
  top: 0;
  left: 11px;
  right: 0;
  border-top: 1px solid #c0c8da;
}
.tabs .active::after {
  content: "";
  position: absolute;
  top: 0;
  left: 5px;
  height: 14px;
  border-left: 1px solid #c0c8da;
  transform: skewX(-38deg);
}

.tools {
  display: flex;
  gap: 8px;
  padding: 6px 5px 21px;
}

.tool {
  position: relative;
  flex: none;
  width: 48px;
  height: 48px;
}
.tool svg {
  display: block;
  width: 48px;
  height: 48px;
  overflow: visible;
}
.tool.fly::after {
  content: "";
  position: absolute;
  right: 0;
  bottom: 0;
  width: 12px;
  height: 12px;
  background: linear-gradient(135deg, #444 56%, #7c7d80 56%);
  clip-path: polygon(100% 0, 100% 100%, 0 100%);
}

.wheel {
  display: block;
  width: 38px;
  height: 38px;
  margin: 0 5px 2px;
  border-radius: 50%;
  background: conic-gradient(#f33, #fb0 45deg, #cf0 80deg, #1e3 120deg, #0ec 170deg, #09f 210deg, #11f 255deg, #a0f 290deg, #f0c 325deg, #f33);
  mask: radial-gradient(circle, transparent 10px, #000 11px);
}

.ln { fill: none; stroke: #777; stroke-width: 4; }
.pt { fill: #fff; stroke: #000; stroke-width: 4; }

.workspace { flex: 1; display: flex; }

.sidebar { flex: none; width: 121px; border-right: 1px solid #9fb0cc; }
.grip-h {
  height: 4px;
  margin: 6px 6px 8px 3px;
  border: solid #c3cfe2;
  border-width: 1px 0;
}
.palette {
  display: grid;
  grid-template-columns: 48px 48px;
  gap: 8px;
  padding-left: 6px;
}

.viewport {
  flex: 1;
  min-width: 0;
  position: relative;
  background: #9da3aa;
}
.scene {
  position: absolute;
  inset: 0;
  width: 100%;
  height: 100%;
}
.axes text { font-size: 26px; fill: #5a5d61; }
.plane { fill: #949ba3; }
.grid-lines { fill: none; stroke: #828990; stroke-width: 1; }
.axis-y { stroke: #449150; stroke-width: 2; }
.axis-x { stroke: #954048; stroke-width: 2; }

.title {
  position: relative;
  display: inline-flex;
  height: 35px;
  background: #839bf0;
  color: #1d2740;
}
.title .name { padding: 0 10px; font-weight: 700; }
.title .drop {
  width: 22px;
  margin-top: 2px;
  border-left: 1px solid #1d2740;
}
.title .drop::before {
  content: "";
  display: block;
  width: 12px;
  height: 7px;
  margin: 0 auto;
  background: #1d2740;
  clip-path: polygon(0 0, 100% 0, 50% 100%);
}
```
